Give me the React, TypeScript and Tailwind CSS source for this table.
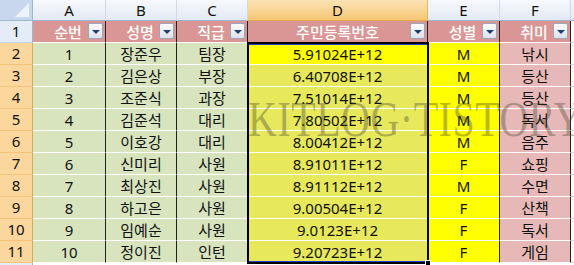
import React from "react";

const data: [string, string, string, string, string, string][] = [
  ["1", "장준우", "팀장", "5.91024E+12", "M", "낚시"],
  ["2", "김은상", "부장", "6.40708E+12", "M", "등산"],
  ["3", "조준식", "과장", "7.51014E+12", "M", "등산"],
  ["4", "김준석", "대리", "7.80502E+12", "M", "독서"],
  ["5", "이호강", "대리", "8.00412E+12", "M", "음주"],
  ["6", "신미리", "사원", "8.91011E+12", "F", "쇼핑"],
  ["7", "최상진", "사원", "8.91112E+12", "M", "수면"],
  ["8", "하고은", "사원", "9.00504E+12", "F", "산책"],
  ["9", "임예순", "사원", "9.0123E+12", "F", "독서"],
  ["10", "정이진", "인턴", "9.20723E+12", "F", "게임"],
];

const headers = ["순번", "성명", "직급", "주민등록번호", "성별", "취미"];
const letters = ["A", "B", "C", "D", "E", "F"];

function Drop() {
  return (
    <div className="absolute right-[2px] top-[2px] w-[15px] h-[16px] rounded-[2px] border border-[#9aa8ba] bg-gradient-to-b from-[#fbfcfd] to-[#dde2e9] flex items-center justify-center">
      <div className="w-0 h-0 border-l-[4px] border-r-[4px] border-t-[4px] border-l-transparent border-r-transparent border-t-[#1e3f73] mt-[1px]" />
    </div>
  );
}

export default function App() {
  const dataBg = (ci: number, ri: number) => {
    if (ci < 3) return "bg-[#d7e4bd]";
    if (ci === 3) return ri === 0 ? "bg-[#ffff00]" : "bg-[#e8e85c]";
    if (ci === 4) return "bg-[#ffff00]";
    return "bg-[#e6b9b8]";
  };
  return (
    <div
      className="relative w-[574px] h-[265px] overflow-hidden bg-white text-[#111]"
      style={{ fontFamily: '"Noto Sans", "Noto Sans CJK KR", sans-serif' }}
    >
      <div className="grid grid-cols-[33px_73px_71px_71px_180px_72px_71px_3px] grid-rows-[21px_repeat(12,22px)]">
        {/* corner */}
        <div className="relative border-r border-b border-[#9eb6ce] bg-[#c8d7ed]">
          <svg className="absolute right-[3px] bottom-[3px]" width="14" height="14" viewBox="0 0 14 14">
            <polygon points="14,0 14,14 0,14" fill="#eef3fa" />
          </svg>
        </div>
        {letters.map((l) => (
          <div
            key={l}
            className={`flex items-center justify-center border-r border-b text-[15px] ${
              l === "D"
                ? "bg-gradient-to-b from-[#fbe3b4] to-[#f6c774] border-r-[#e2b56a] border-b-[#e2a84f]"
                : "bg-gradient-to-b from-[#f6f8fb] to-[#e3eaf4] border-r-[#d0d9e5] border-b-[#9eb6ce]"
            }`}
          >
            {l}
          </div>
        ))}
        <div className="border-b border-[#9eb6ce] bg-gradient-to-b from-[#f6f8fb] to-[#e3eaf4]" />

        {/* row 1 */}
        <div className="flex items-center justify-center border-r border-b border-r-[#9eb6ce] border-b-[#c6d3e3] bg-[#e4ecf7] text-[15px]">
          1
        </div>
        {headers.map((h, i) => (
          <div
            key={h}
            className="relative flex items-center justify-center border-r border-b border-r-[#222] border-b-white bg-[#da9694] text-white text-[15px] font-medium pt-[1px]"
          >
            <span className={i === 3 ? "" : "mr-[2px]"}>{h}</span>
            <Drop />
          </div>
        ))}
        <div className="border-b border-[#d0d7e5] bg-white" />

        {data.map((r, ri) => (
          <React.Fragment key={ri}>
            <div className="flex items-center justify-center border-r border-b border-r-[#e2a84f] border-b-[#f3c37c] bg-[#fbd69d] text-[15px]">
              {ri + 2}
            </div>
            {r.map((v, ci) => (
              <div
                key={ci}
                className={`flex items-center justify-center border-r border-b border-r-[#222] border-b-white text-[15px] pt-[2px] ${dataBg(ci, ri)}`}
              >
                {v}
              </div>
            ))}
            <div className="border-b border-[#d0d7e5] bg-white" />
          </React.Fragment>
        ))}

        {/* row 12 */}
        <div className="border-r border-[#9eb6ce] bg-[#e4ecf7]" />
        <div className="col-span-7 bg-white" />
      </div>

      {/* selection */}
      <div className="absolute left-[247px] top-[42px] w-[182px] h-[222px] border-2 border-black pointer-events-none">
        <div className="absolute inset-0 border-t border-b border-[#1d3fd0]" />
        <div className="absolute -right-[4px] -bottom-[4px] w-[6px] h-[6px] bg-black border border-white" />
      </div>

      {/* watermark */}
      <div
        className="absolute left-[248px] top-[95px] pointer-events-none whitespace-nowrap text-[40px] leading-none text-[rgba(60,60,40,0.36)] origin-top-left scale-y-[1.25] tracking-[0.5px]"
        style={{ fontFamily: '"Liberation Serif", serif' }}
      >
        KITLOG·TISTORY
      </div>
    </div>
  );
}
